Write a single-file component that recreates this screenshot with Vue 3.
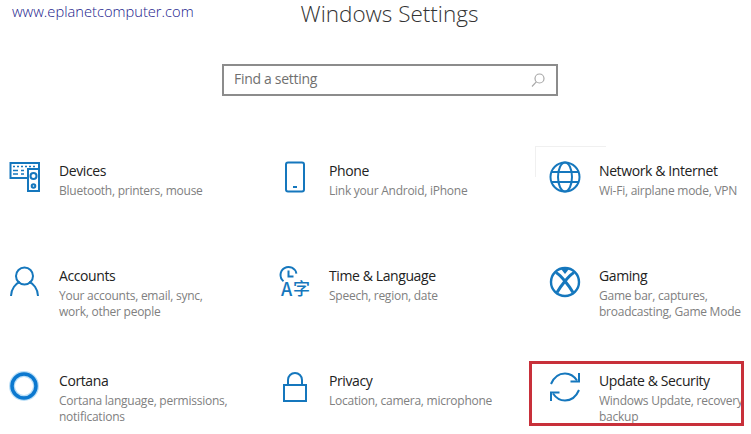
<script setup>
const tiles = [
  { id: 'devices', title: 'Devices', desc: 'Bluetooth, printers, mouse' },
  { id: 'phone', title: 'Phone', desc: 'Link your Android, iPhone' },
  { id: 'network', title: 'Network & Internet', desc: 'Wi-Fi, airplane mode, VPN' },
  { id: 'accounts', title: 'Accounts', desc: 'Your accounts, email, sync, work, other people' },
  { id: 'time', title: 'Time & Language', desc: 'Speech, region, date' },
  { id: 'gaming', title: 'Gaming', desc: 'Game bar, captures, broadcasting, Game Mode' },
  { id: 'cortana', title: 'Cortana', desc: 'Cortana language, permissions, notifications' },
  { id: 'privacy', title: 'Privacy', desc: 'Location, camera, microphone' },
  { id: 'update', title: 'Update & Security', desc: 'Windows Update, recovery, backup' }
]
</script>

<template>
  <main class="page">
    <a class="site">www.eplanetcomputer.com</a>
    <h1>Windows Settings</h1>

    <div class="search">
      <span>Find a setting</span>
      <svg width="16" height="16" viewBox="0 0 16 16" fill="none" stroke="#a8a8a8" stroke-width="1.2">
        <circle cx="9.500" cy="6.500" r="4.500" />
        <path d="M6.300 9.800 2 14.500" />
      </svg>
    </div>

    <section class="grid">
      <div v-for="t in tiles" :key="t.id" class="tile" :class="{ marked: t.id === 'update', faint: t.id === 'network' }">
        <svg class="icon" width="32" height="32" viewBox="0 0 32 32" fill="none" stroke="#1577bd" stroke-width="2">
          <template v-if="t.id === 'devices'">
            <path d="M19 17H1.500V2H30V7" />
            <path d="M4 5.500h2M8 5.500h2M12 5.500h2M16 5.500h2M20 5.500h2M24 5.500h2M4 9.500h5M12 9.500h3M4 13h5M12 13h3" stroke-width="1.500" />
            <rect x="19" y="8" width="11" height="22" />
            <circle cx="24.500" cy="15" r="3" />
            <circle cx="24.500" cy="25" r="1.800" />
          </template>
          <template v-else-if="t.id === 'phone'">
            <rect x="7" y="1.500" width="18" height="29" rx="2" />
            <path d="M14 26h4" />
          </template>
          <template v-else-if="t.id === 'network'">
            <circle cx="16" cy="16" r="14.500" />
            <ellipse cx="16" cy="16" rx="7" ry="14.500" />
            <path d="M2.500 11h27M2.500 21h27" />
          </template>
          <template v-else-if="t.id === 'accounts'">
            <circle cx="15.500" cy="10" r="8.500" />
            <path d="M2 30c0-7 5-13 9-14M29 30c0-7-5-13-9-14" />
          </template>
          <template v-else-if="t.id === 'time'">
            <path d="M4.500 15.200A8 8 0 1 1 17.400 7.600" />
            <path d="M9.500 4.500v6h5" />
            <text class="glyph" x="2" y="30" font-size="18">A</text>
            <text class="glyph" x="14" y="29" font-size="17">字</text>
          </template>
          <template v-else-if="t.id === 'gaming'">
            <circle cx="16" cy="16" r="14" stroke-width="2.400" />
            <path d="M12 3h8l-4 5Z" fill="#1577bd" stroke="none" />
            <path d="M7 6.500c5 3 13 13 17 20M25 6.500c-5 3-13 13-17 20" stroke-width="3" />
          </template>
          <template v-else-if="t.id === 'cortana'">
            <circle cx="15" cy="15" r="12" stroke="#8cc8f0" stroke-width="6" opacity=".6" />
            <circle cx="15" cy="15" r="12" stroke="#0b78cf" stroke-width="3.500" />
          </template>
          <template v-else-if="t.id === 'privacy'">
            <rect x="5" y="14" width="22" height="16" />
            <path d="M9 14V9a7 7 0 0 1 14 0v5" />
          </template>
          <template v-else>
            <path d="M2 13C5 6 10 2.500 16 2.500c5 0 9 2.500 12 7" />
            <path d="M30 2v8.500h-8.500" />
            <path d="M30 19c-3 7-8 10.500-14 10.500-5 0-9-2.500-12-7" />
            <path d="M2 30v-8.500h8.500" />
          </template>
        </svg>
        <div class="text">
          <h2>{{ t.title }}</h2>
          <p>{{ t.desc }}</p>
        </div>
      </div>
    </section>
  </main>
</template>

<style scoped>
.page {
  position: relative;
  width: 751px;
  height: 434px;
  overflow: hidden;
  background: #fff;
  font-family: "Open Sans", "Noto Sans", sans-serif;
}
.site {
  position: absolute;
  left: 12px;
  top: 2px;
  font-size: 14.700px;
  font-weight: 300;
  line-height: 18px;
  color: #1a1a8c;
}
h1 {
  margin: 0;
  padding-left: 28px;
  height: 30px;
  text-align: center;
  font-size: 22.500px;
  font-weight: 300;
  line-height: 27px;
  color: #333;
}
.search {
  box-sizing: border-box;
  width: 336px;
  height: 32px;
  margin: 34px 0 0 222px;
  padding: 0 10px;
  display: flex;
  align-items: center;
  justify-content: space-between;
  border: 2px solid #8c8c8c;
  font-size: 14px;
  letter-spacing: -0.3px;
  color: #707070;
}
.search span {
  margin-bottom: 3px;
}
.grid {
  display: grid;
  grid-template-columns: repeat(3, 270px);
  grid-auto-rows: 105px;
  margin-top: 65px;
}
.tile {
  position: relative;
  display: flex;
  gap: 18px;
  padding-left: 9px;
}
.faint::before {
  content: "";
  position: absolute;
  left: -5px;
  top: -15px;
  width: 70px;
  height: 30px;
  border-top: 1px solid #f0f0f0;
  border-left: 1px solid #f0f0f0;
}
.marked::after {
  content: "";
  position: absolute;
  left: -11px;
  top: -10px;
  box-sizing: border-box;
  width: 215px;
  height: 65px;
  border: 3px solid #c8303a;
}
.marked .text {
  width: 142px;
  overflow: hidden;
}
.icon {
  flex: none;
  overflow: visible;
}
.glyph {
  fill: #1577bd;
  stroke: none;
  font-weight: 500;
  font-family: "Noto Sans CJK SC", "Noto Sans", sans-serif;
}
.text {
  width: 174px;
}
h2 {
  margin: 0;
  font-size: 14px;
  font-weight: 400;
  letter-spacing: -0.4px;
  line-height: 20px;
  color: #222;
  white-space: nowrap;
}
p {
  margin: 2px 0 0;
  width: 174px;
  font-size: 12px;
  letter-spacing: -0.25px;
  line-height: 16px;
  color: #808080;
}
</style>
